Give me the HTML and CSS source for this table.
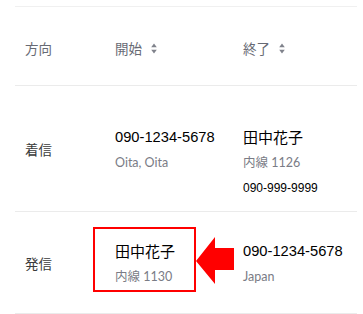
FILE: index.html
```html
<!DOCTYPE html>
<html lang="ja">
<head>
<meta charset="utf-8">
<link rel="stylesheet" href="styles.css">
</head>
<body>
<div class="page">
  <div class="table">
    <div class="row head">
      <div class="c1">方向</div>
      <div class="c2"><span>開始</span><svg class="sort" width="6" height="11" viewBox="0 0 6 11"><path d="M3 0.5 L5.8 4.3 H0.2 Z M3 10.5 L5.8 6.7 H0.2 Z" fill="#80838c"/></svg></div>
      <div class="c3"><span>終了</span><svg class="sort" width="6" height="11" viewBox="0 0 6 11"><path d="M3 0.5 L5.8 4.3 H0.2 Z M3 10.5 L5.8 6.7 H0.2 Z" fill="#80838c"/></svg></div>
    </div>
    <div class="row row-in">
      <div class="c1 label">着信</div>
      <div class="c2">
        <div class="main num">090-1234-5678</div>
        <div class="sub">Oita, Oita</div>
      </div>
      <div class="c3">
        <div class="main name">田中花子</div>
        <div class="sub">内線 1126</div>
        <div class="extra num">090-999-9999</div>
      </div>
    </div>
    <div class="row row-out">
      <div class="c1 label">発信</div>
      <div class="c2">
        <div class="main name">田中花子</div>
        <div class="sub">内線 1130</div>
      </div>
      <div class="c3">
        <div class="main num">090-1234-5678</div>
        <div class="sub">Japan</div>
      </div>
    </div>
  </div>
  <div class="highlight"></div>
  <svg class="arrow" width="40" height="48" viewBox="0 0 40 48"><polygon points="1,24 20,0 20,11 39,11 39,33 20,33 20,47" fill="#ff0000"/></svg>
</div>
</body>
</html>
```
FILE: styles.css
```css
html, body {
  margin: 0;
  padding: 0;
  background: #fff;
}
.page {
  position: relative;
  width: 363px;
  height: 314px;
  overflow: hidden;
  padding-top: 6px;
  box-sizing: border-box;
  font-family: "Lato", "Noto Sans CJK JP", sans-serif;
}
.table {
  margin-left: 15px;
  width: 342px;
  border-top: 1px solid #f0f0f0;
}
.row {
  display: flex;
  align-items: center;
  border-bottom: 1px solid #ebebeb;
}
.head {
  height: 78px;
  color: #676a74;
  font-family: "Noto Sans CJK JP", sans-serif;
  font-size: 13.5px;
}
.head .c1, .head .c2, .head .c3 {
  display: flex;
  align-items: center;
  padding-top: 4px;
}
.sort {
  margin-left: 9px;
}
.row-in { height: 125px; }
.row-out { height: 101px; }
.c1 { width: 90px; padding-left: 10px; box-sizing: border-box; }
.c2 { width: 128px; padding-left: 10px; box-sizing: border-box; }
.c3 { flex: 1; padding-left: 10px; box-sizing: border-box; }
.label {
  font-family: "Noto Sans CJK JP", sans-serif;
  font-size: 13.5px;
  color: #3a3a3a;
}
.main {
  height: 22px;
  line-height: 22px;
  color: #000;
  margin-bottom: 6px;
}
.num {
  font-family: "Liberation Sans", Arial, sans-serif;
  font-size: 14.7px;
}
.name {
  font-family: "Noto Sans CJK JP", sans-serif;
  font-size: 15px;
}
.sub {
  height: 18px;
  line-height: 18px;
  font-family: "Lato", "Noto Sans CJK JP", sans-serif;
  font-size: 12.5px;
  color: #7a7c86;
}
.extra {
  height: 18px;
  line-height: 18px;
  margin-top: 7px;
  margin-bottom: -25px;
  font-size: 12px;
  color: #000;
}
.highlight {
  position: absolute;
  left: 93px;
  top: 227px;
  width: 103px;
  height: 65px;
  border: 2px solid #ff0000;
  box-sizing: border-box;
}
.arrow {
  position: absolute;
  left: 195px;
  top: 237px;
}
```
